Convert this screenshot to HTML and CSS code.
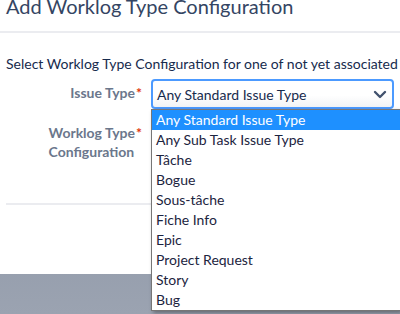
FILE: index.html
```html
<!DOCTYPE html>
<html lang="en">
<head>
  <meta charset="UTF-8">
  <title>Add Worklog Type Configuration</title>
  <link rel="stylesheet" href="styles.css">
</head>
<body>

<div class="dialog">
  <div class="dialog-header">
    <h2 class="dialog-title">Add Worklog Type Configuration</h2>
  </div>

  <div class="dialog-content">
    <p class="intro">Select Worklog Type Configuration for one of not yet associated issue types.</p>

    <div class="field-group">
      <label class="field-label">
        <span class="label-text"><span class="req-line">Issue Type<span class="required">*</span></span></span>
      </label>
      <div class="select-wrap">
        <div class="fake-select">
          <span>Any Standard Issue Type</span>
          <svg class="chevron" width="14" height="9" viewBox="0 0 14 9">
            <path d="M2 2 L7 7 L12 2" fill="none" stroke="#42526e" stroke-width="2.4" stroke-linecap="round" stroke-linejoin="round"/>
          </svg>
        </div>
        <ul class="dropdown">
          <li class="selected">Any Standard Issue Type</li>
          <li>Any Sub Task Issue Type</li>
          <li>Tâche</li>
          <li>Bogue</li>
          <li>Sous-tâche</li>
          <li>Fiche Info</li>
          <li>Epic</li>
          <li>Project Request</li>
          <li>Story</li>
          <li>Bug</li>
        </ul>
      </div>
    </div>

    <div class="field-group">
      <label class="field-label">
        <span class="label-text"><span class="req-line">Worklog Type<span class="required">*</span></span><br>Configuration</span>
      </label>
      <div class="select-wrap"></div>
    </div>
  </div>

  <div class="dialog-footer"></div>
</div>

</body>
</html>
```

FILE: styles.css
```css
html {
  overflow: hidden;
}

body {
  margin: 0;
  padding: 0;
  font-family: Lato, "Open Sans", sans-serif;
  font-size: 14px;
  color: #172b4d;
  height: 314px;
  overflow: hidden;
  background: linear-gradient(to bottom, #7f889a, #9ba3b1);
}

.dialog {
  background: #fff;
  height: 274px;
}

.dialog-header {
  display: flow-root;
  height: 31px;
  border-bottom: 2px solid #ebecf0;
  padding: 0 6px;
}

.dialog-title {
  margin: 0;
  margin-top: -6px;
  font-size: 20px;
  font-weight: normal;
  line-height: 24px;
  color: #344563;
  white-space: nowrap;
}

.dialog-content {
  display: flow-root;
  padding: 0 6px;
  height: 170px;
}

.intro {
  margin: 21px 0 5px;
  line-height: 20px;
  white-space: nowrap;
}

.field-group {
  display: flex;
  gap: 16px;
  margin-bottom: 10px;
}

.field-label {
  width: 129px;
  flex-shrink: 0;
  text-align: right;
  font-weight: bold;
  color: #6b778c;
  line-height: 19px;
  padding-top: 4px;
}

.label-text {
  display: inline-block;
  text-align: left;
}

.req-line {
  position: relative;
}

.required {
  color: #de350b;
  position: absolute;
  left: 100%;
  top: -1px;
  padding-left: 1px;
}

.select-wrap {
  position: relative;
  width: 248px;
  min-height: 30px;
}

.fake-select {
  height: 26px;
  border: 2px solid #4c9aff;
  border-radius: 4px;
  background: linear-gradient(to bottom, #fff 55%, #f2f3f5);
  display: flex;
  align-items: center;
  justify-content: space-between;
  padding: 0 5px 0 4px;
}

.chevron {
  display: block;
}

.dropdown {
  position: absolute;
  top: 30px;
  left: 0;
  z-index: 2;
  width: 248px;
  margin: 0;
  padding: 0;
  list-style: none;
  background: #fff;
  border: 1px solid #767676;
  border-right: none;
  box-shadow: 2px 2px 4px rgba(0, 0, 0, 0.35);
}

.dropdown li {
  height: 20px;
  line-height: 20px;
  padding-left: 4px;
  color: #1c2440;
  white-space: nowrap;
}

.dropdown li.selected {
  background: #1e90ff;
  color: #fff;
}

.dialog-footer {
  margin: 0 6px;
  border-top: 2px solid #ebecf0;
}
```
